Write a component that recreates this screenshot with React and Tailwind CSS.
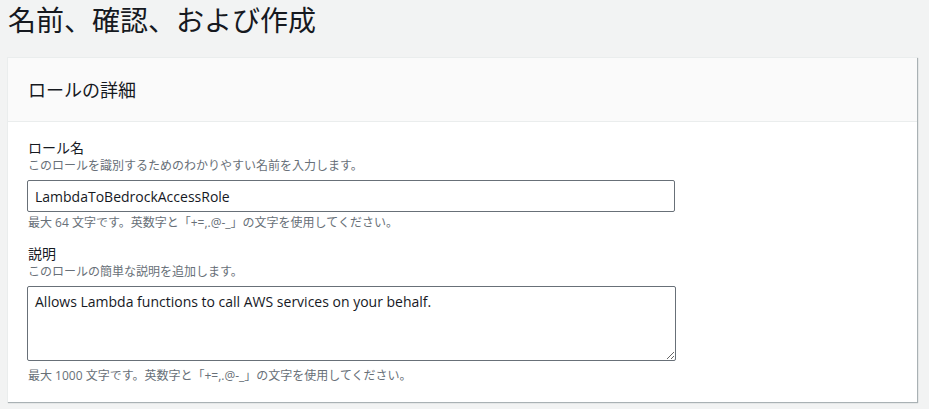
import React from "react";

const font = { fontFamily: '"Open Sans", "Noto Sans CJK JP", sans-serif' };

export default function App() {
  return (
    <div className="w-[929px] h-[409px] bg-[#f2f3f3] overflow-hidden text-[#16191f]" style={font}>
      <h1 className="pl-[8px] pt-[1px] h-[57px] text-[28px] leading-[38px] font-normal text-[#16191f]">
        名前、確認、および作成
      </h1>
      <div className="ml-[7px] w-[910px] bg-white border-l border-t border-[#eaeded] shadow-[1px_1px_1px_0_rgba(0,28,36,0.3)]">
        <div className="h-[64px] bg-[#fafafa] border-b border-[#eaeded] px-[20px] flex items-center">
          <h2 className="text-[18px] leading-[24px] font-normal">ロールの詳細</h2>
        </div>
        <div className="px-[20px] pt-[16px] pb-[18px]">
          <div className="text-[14px] leading-[20px]">ロール名</div>
          <div className="text-[12px] leading-[16px] text-[#687078]">このロールを識別するためのわかりやすい名前を入力します。</div>
          <div className="mt-[6px] -ml-[1px] w-[648px] h-[32px] border border-[#687078] rounded-[2px] px-[7px] flex items-center text-[14px]">
            LambdaToBedrockAccessRole
          </div>
          <div className="mt-[3px] text-[12px] leading-[16px] text-[#687078]">最大 64 文字です。英数字と「+=,.@-_」の文字を使用してください。</div>
          <div className="mt-[13px] text-[14px] leading-[20px]">説明</div>
          <div className="text-[12px] leading-[16px] text-[#687078]">このロールの簡単な説明を追加します。</div>
          <textarea
            readOnly
            className="block mt-[6px] -ml-[1px] w-[649px] h-[75px] border border-[#687078] rounded-[2px] px-[7px] pt-[5px] pb-[4px] text-[14px] leading-[20px] text-[#16191f] outline-none resize-y"
            style={font}
            defaultValue="Allows Lambda functions to call AWS services on your behalf."
          />
          <div className="mt-[7px] text-[12px] leading-[16px] text-[#687078]">最大 1000 文字です。英数字と「+=,.@-_」の文字を使用してください。</div>
        </div>
      </div>
    </div>
  );
}
